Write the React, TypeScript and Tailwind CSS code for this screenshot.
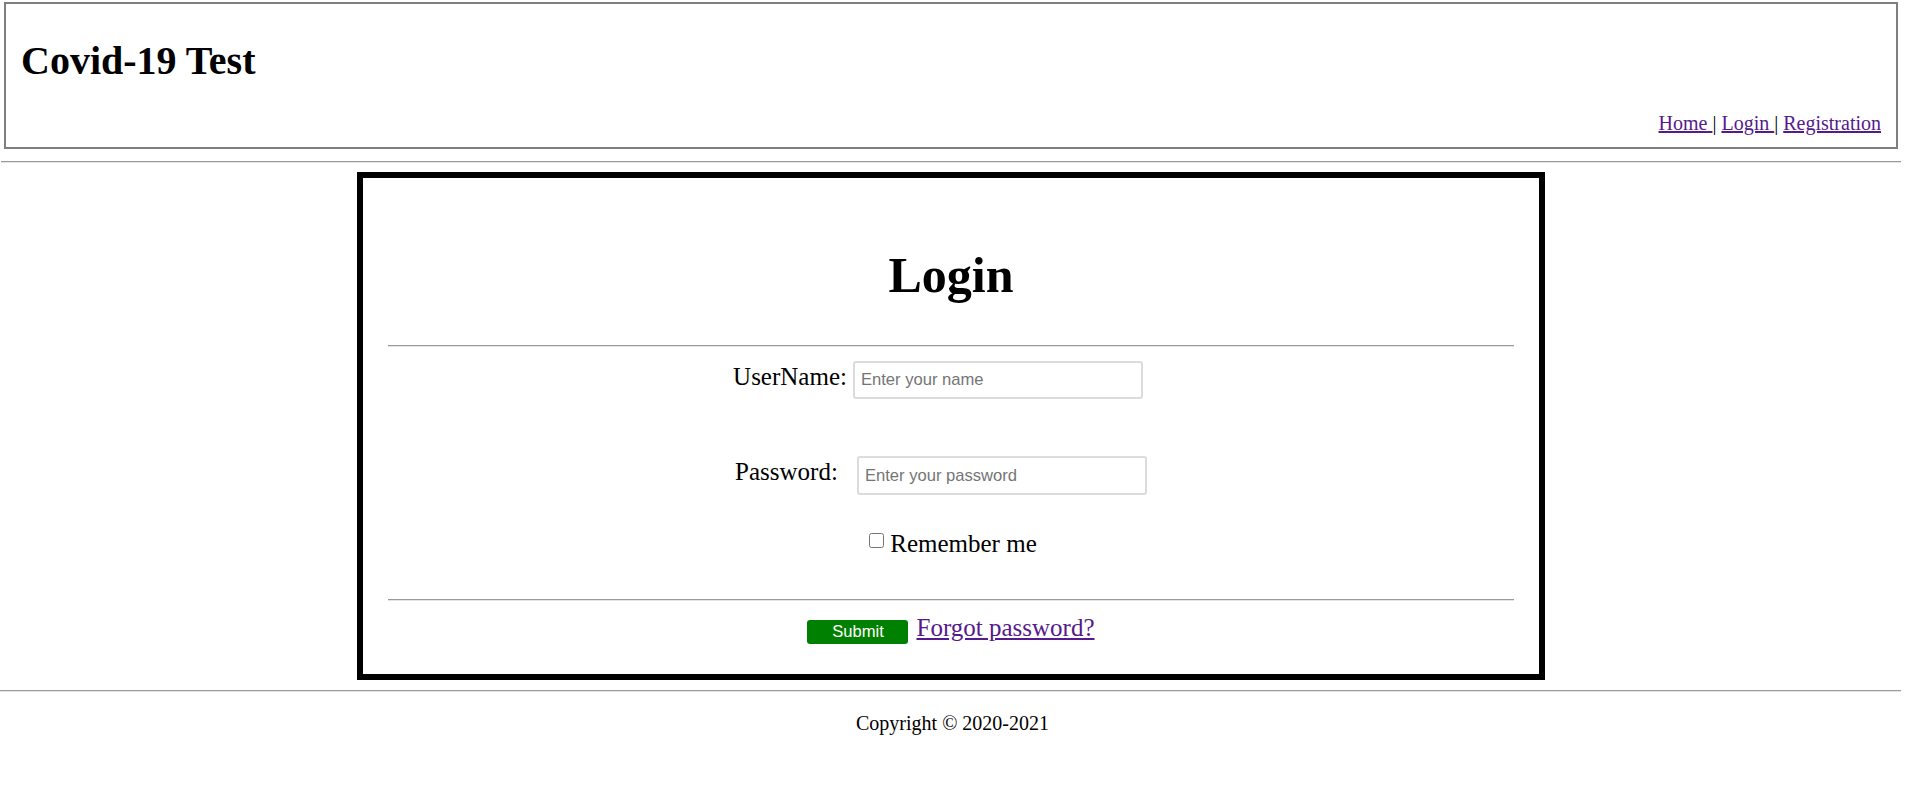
import React from "react";

export default function App() {
  return (
    <div className="min-h-[789px] bg-white text-black font-['Liberation_Serif','Times_New_Roman',serif]">
      <header className="mt-[2px] ml-[4px] mr-[7px] h-[147px] border-2 border-[#7f7f7f] pl-[15px] pr-[15px]">
        <h1 className="mt-[37px] text-[40px] font-bold leading-none">Covid-19 Test</h1>
        <nav className="mt-[32px] text-right text-[20px] leading-none">
          <a href="#" className="text-[#551a8b] underline">Home </a>|{" "}
          <a href="#" className="text-[#551a8b] underline">Login </a>|{" "}
          <a href="#" className="text-[#551a8b] underline">Registration</a>
        </nav>
      </header>

      <div className="mt-[12px] ml-[1px] mr-[4px] border-t border-t-[#9a9a9a] border-b border-b-[#e4e4e4]" />

      <div className="mt-[9px] flex justify-center pr-[3px]">
        <main className="w-[1188px] h-[508px] border-[6px] border-black px-[25px]">
          <h2 className="mt-[72px] text-center text-[50px] font-bold leading-none">Login</h2>
          <div className="mt-[45px] border-t border-t-[#9a9a9a] border-b border-b-[#e4e4e4]" />

          <div className="mt-[14px] flex items-start justify-center pr-[26px]">
            <label className="mt-[3px] text-[25px] leading-none">UserName:</label>
            <input
              type="text"
              placeholder="Enter your name"
              className="ml-[6px] w-[290px] h-[38px] border-2 border-[#dcdcdc] rounded-[3px] pl-[6px] text-[16.6px] font-['Liberation_Sans',Arial,sans-serif] placeholder:text-[#757575] outline-none"
            />
          </div>

          <div className="mt-[57px] flex items-start justify-center pr-[20px]">
            <label className="mt-[3px] text-[25px] leading-none">Password:</label>
            <input
              type="password"
              placeholder="Enter your password"
              className="ml-[19px] w-[290px] h-[39px] border-2 border-[#dcdcdc] rounded-[3px] pl-[6px] text-[16.6px] font-['Liberation_Sans',Arial,sans-serif] placeholder:text-[#757575] outline-none"
            />
          </div>

          <div className="mt-[36px] flex items-start justify-center pl-[4px]">
            <input type="checkbox" className="mt-[2px] w-[15px] h-[15px] m-0" />
            <span className="ml-[6px] text-[25px] leading-none">Remember me</span>
          </div>

          <div className="mt-[43px] border-t border-t-[#9a9a9a] border-b border-b-[#e4e4e4]" />

          <div className="mt-[14px] flex items-start justify-center">
            <button className="mt-[5px] w-[101px] h-[24px] bg-[#008000] rounded-[3px] text-white text-[16.6px] leading-none font-['Liberation_Sans',Arial,sans-serif]">
              Submit
            </button>
            <a href="#" className="ml-[8px] text-[25px] leading-none text-[#551a8b] underline">
              Forgot password?
            </a>
          </div>
        </main>
      </div>

      <div className="mt-[10px] mr-[4px] border-t border-t-[#9a9a9a] border-b border-b-[#e4e4e4]" />

      <footer className="mt-[21px] text-center text-[20px] leading-none">Copyright © 2020-2021</footer>
    </div>
  );
}
